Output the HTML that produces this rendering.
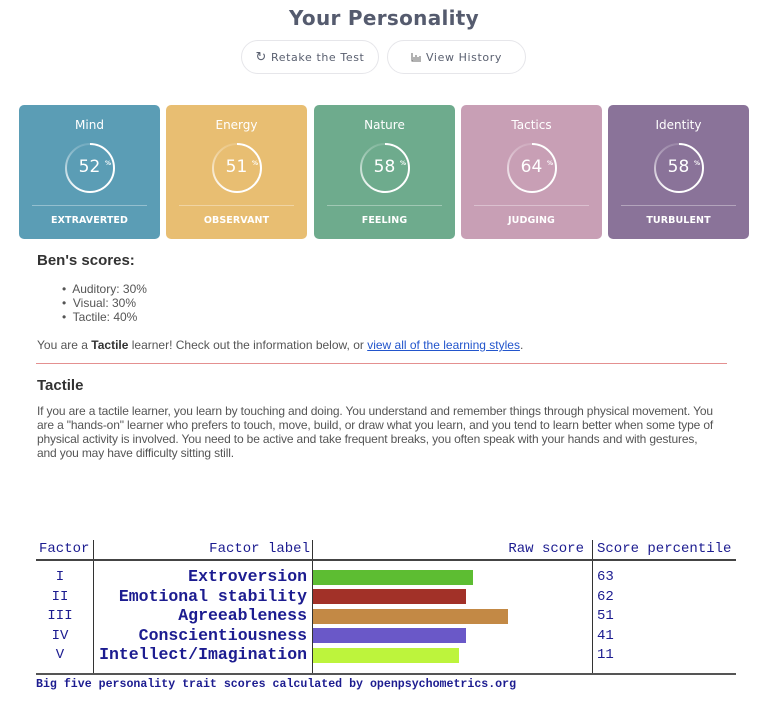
<!DOCTYPE html>
<html><head><meta charset="utf-8"><style>
*{margin:0;padding:0;box-sizing:border-box}
body{width:777px;height:711px;background:#fff;position:relative;overflow:hidden;font-family:"Liberation Sans",sans-serif}
.a{position:absolute;white-space:nowrap}
h1{position:absolute;left:0;width:768px;text-align:center;top:6px;font:bold 20px "DejaVu Sans","Liberation Sans",sans-serif;color:#555b6e;letter-spacing:0.3px}
.btn{position:absolute;top:40px;height:34px;border:1px solid #e6e6ea;border-radius:17px;font:11px "DejaVu Sans",sans-serif;color:#5a6070;display:flex;align-items:center;justify-content:center;letter-spacing:0.6px}
.card{position:absolute;top:105px;width:141px;height:134px;border-radius:5px;color:#fff;font-family:"DejaVu Sans",sans-serif}
.card .t{position:absolute;top:13px;width:100%;text-align:center;font-size:12px}
.card svg{position:absolute;left:45px;top:37px}
.card .n{position:absolute;top:52px;left:0;width:100%;text-align:center;font-size:17px}
.card .p{position:absolute;top:55px;left:86px;font-size:6px;font-weight:bold}
.card .l{position:absolute;top:100px;left:13px;right:13px;border-top:1px solid rgba(255,255,255,.35)}
.card .b{position:absolute;top:110px;width:100%;text-align:center;font-size:9.5px;font-weight:bold;letter-spacing:0.1px}
.txt{color:#555;font-size:12px}
.m{font-family:"Liberation Mono","DejaVu Sans Mono",monospace;color:#1c1c90}
.bar{position:absolute;left:313px;height:15px}
</style></head><body>
<h1>Your Personality</h1>
<div class="btn" style="left:241px;width:138px"><span style="font-size:13px;margin-right:4px">↻</span>Retake the Test</div>
<div class="btn" style="left:387px;width:139px"><svg width="11" height="10" style="margin-right:4px"><path d="M1 1V9H10M3 8V5M5 8V3M7 8V5M9 8V4" stroke="#666" fill="none" stroke-width="1"/></svg>View History</div>

<div class="card" style="left:19px;background:#5b9db5"><div class="t">Mind</div><svg width="52" height="52"><defs><linearGradient id="g" x1="0" y1="1" x2="0" y2="0"><stop offset="0" stop-color="#fff" stop-opacity="1"/><stop offset="1" stop-color="#fff" stop-opacity=".15"/></linearGradient></defs><path d="M26 2A24 24 0 0 1 26 50" stroke="#fff" stroke-width="2" fill="none"/><path d="M26 50A24 24 0 0 1 26 2" stroke="url(#g)" stroke-width="2" fill="none"/></svg><div class="n">52</div><div class="p">%</div><div class="l"></div><div class="b">EXTRAVERTED</div></div>
<div class="card" style="left:166px;background:#e8be72"><div class="t">Energy</div><svg width="52" height="52"><path d="M26 2A24 24 0 0 1 26 50" stroke="#fff" stroke-width="2" fill="none"/><path d="M26 50A24 24 0 0 1 26 2" stroke="url(#g)" stroke-width="2" fill="none"/></svg><div class="n">51</div><div class="p">%</div><div class="l"></div><div class="b">OBSERVANT</div></div>
<div class="card" style="left:314px;background:#6eab8d"><div class="t">Nature</div><svg width="52" height="52"><path d="M26 2A24 24 0 0 1 26 50" stroke="#fff" stroke-width="2" fill="none"/><path d="M26 50A24 24 0 0 1 26 2" stroke="url(#g)" stroke-width="2" fill="none"/></svg><div class="n">58</div><div class="p">%</div><div class="l"></div><div class="b">FEELING</div></div>
<div class="card" style="left:461px;background:#c89fb5"><div class="t">Tactics</div><svg width="52" height="52"><path d="M26 2A24 24 0 0 1 26 50" stroke="#fff" stroke-width="2" fill="none"/><path d="M26 50A24 24 0 0 1 26 2" stroke="url(#g)" stroke-width="2" fill="none"/></svg><div class="n">64</div><div class="p">%</div><div class="l"></div><div class="b">JUDGING</div></div>
<div class="card" style="left:608px;background:#8a7399"><div class="t">Identity</div><svg width="52" height="52"><path d="M26 2A24 24 0 0 1 26 50" stroke="#fff" stroke-width="2" fill="none"/><path d="M26 50A24 24 0 0 1 26 2" stroke="url(#g)" stroke-width="2" fill="none"/></svg><div class="n">58</div><div class="p">%</div><div class="l"></div><div class="b">TURBULENT</div></div>

<div class="a" style="left:37px;top:252px;font-size:15px;font-weight:bold;color:#333">Ben's scores:</div>
<div class="a txt" style="left:62px;top:282px;line-height:14px">•&nbsp; Auditory: 30%<br>•&nbsp; Visual: 30%<br>•&nbsp; Tactile: 40%</div>
<div class="a txt" style="left:37px;top:338px">You are a <b style="color:#333">Tactile</b> learner! Check out the information below, or <span style="color:#2255cc;text-decoration:underline">view all of the learning styles</span>.</div>
<div class="a" style="left:36px;top:363px;width:691px;border-top:1px solid #e49090"></div>
<div class="a" style="left:37px;top:377px;font-size:15px;font-weight:bold;color:#333">Tactile</div>
<div class="a txt" style="left:37px;top:404px;line-height:14px;letter-spacing:-0.15px">If you are a tactile learner, you learn by touching and doing. You understand and remember things through physical movement. You<br>are a "hands-on" learner who prefers to touch, move, build, or draw what you learn, and you tend to learn better when some type of<br>physical activity is involved. You need to be active and take frequent breaks, you often speak with your hands and with gestures,<br>and you may have difficulty sitting still.</div>

<div class="a" style="left:93px;top:540px;height:134px;border-left:1px solid #333"></div>
<div class="a" style="left:312px;top:540px;height:134px;border-left:1px solid #333"></div>
<div class="a" style="left:592px;top:540px;height:134px;border-left:1px solid #333"></div>
<div class="a" style="left:36px;top:559px;width:700px;border-top:2px solid #444"></div>
<div class="a" style="left:36px;top:673px;width:700px;border-top:2px solid #555"></div>
<div class="a m" style="left:39px;top:541px;font-size:14px">Factor</div>
<div class="a m" style="left:96px;top:541px;width:214px;text-align:right;font-size:14px">Factor label</div>
<div class="a m" style="left:314px;top:541px;width:270px;text-align:right;font-size:14px">Raw score</div>
<div class="a m" style="left:597px;top:541px;font-size:14px">Score percentile</div>

<div class="a m" style="left:40px;top:568px;width:40px;text-align:center;font-size:14px;line-height:19.5px">I<br>II<br>III<br>IV<br>V</div>
<div class="a m" style="left:96px;top:567px;width:211px;text-align:right;font-size:16.5px;font-weight:bold;line-height:19.5px">Extroversion<br>Emotional stability<br>Agreeableness<br>Conscientiousness<br>Intellect/Imagination</div>
<div class="a m" style="left:597px;top:568px;font-size:14px;line-height:19.5px">63<br>62<br>51<br>41<br>11</div>
<div class="bar" style="top:570px;width:160px;background:#5dbd32"></div>
<div class="bar" style="top:589px;width:153px;background:#a23128"></div>
<div class="bar" style="top:609px;width:195px;background:#c38945"></div>
<div class="bar" style="top:628px;width:153px;background:#6a58c8"></div>
<div class="bar" style="top:648px;width:146px;background:#bdf43c"></div>
<div class="a m" style="left:36px;top:678px;font-size:11.6px;font-weight:bold">Big five personality trait scores calculated by openpsychometrics.org</div>
</body></html>
